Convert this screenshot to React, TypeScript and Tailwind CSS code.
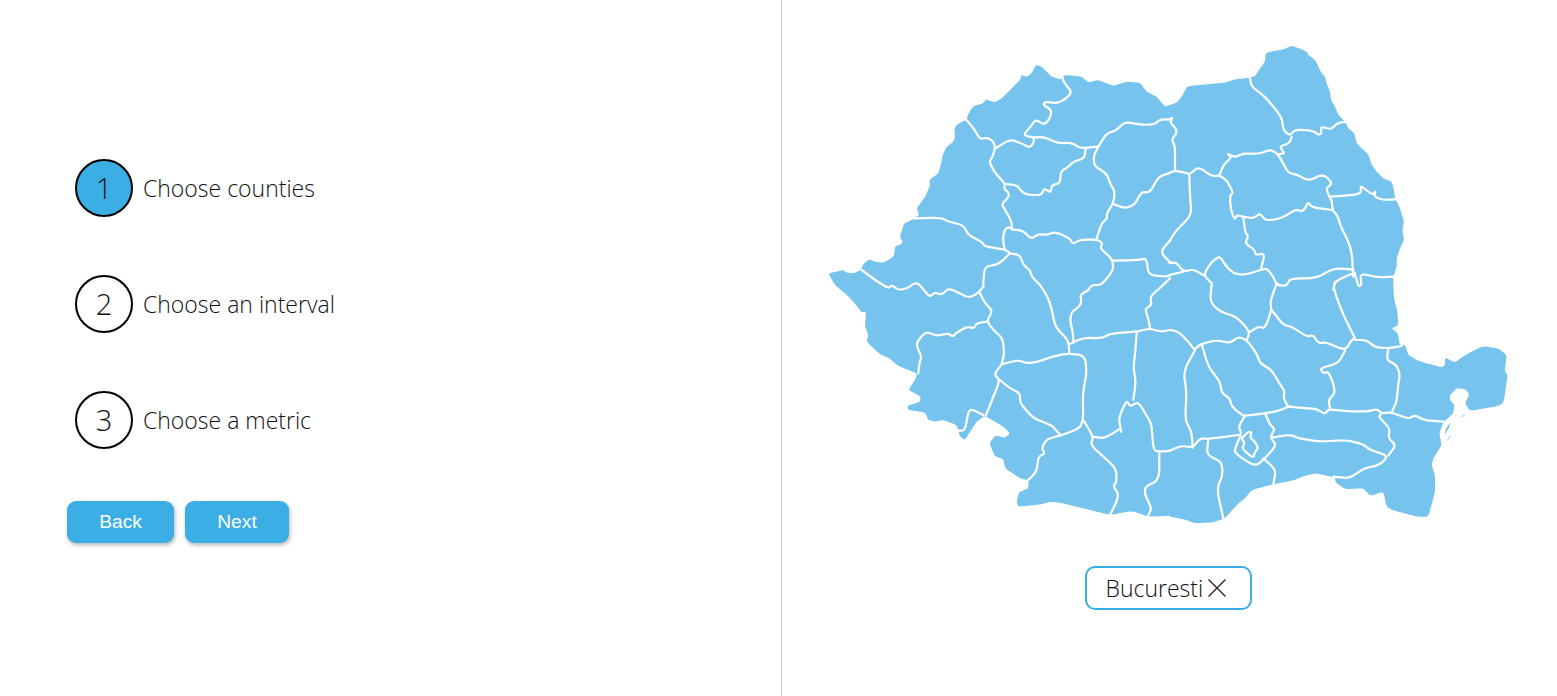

import React from "react";

type Pt = [number, number];
const parse = (ox: number, oy: number, s: string): Pt[] =>
  s.trim().split(/\s+/).map((p) => {
    const [x, y] = p.split(",").map(Number);
    return [ox + x / 3, oy + y / 3] as Pt;
  });

const f = (n: number) => n.toFixed(1);

const rounded = (pts: Pt[], t: number, closed: boolean) => {
  const n = pts.length;
  const at = (i: number) => pts[(i + n) % n];
  let d = "";
  const first = closed ? 0 : 1;
  const last = closed ? n : n - 1;
  if (!closed) d = `M${f(pts[0][0])} ${f(pts[0][1])}`;
  for (let i = first; i < last; i++) {
    const p = at(i);
    const a = at(i - 1);
    const b = at(i + 1);
    const sx = p[0] + (a[0] - p[0]) * t;
    const sy = p[1] + (a[1] - p[1]) * t;
    const ex = p[0] + (b[0] - p[0]) * t;
    const ey = p[1] + (b[1] - p[1]) * t;
    d += `${d ? " L" : "M"}${f(sx)} ${f(sy)} Q${f(p[0])} ${f(p[1])} ${f(ex)} ${f(ey)}`;
  }
  if (closed) d += " Z";
  else d += ` L${f(pts[n - 1][0])} ${f(pts[n - 1][1])}`;
  return d;
};

const outline =
  parse(820, 40, "25,700 70,690 80,698 100,700 122,690 130,672 148,658 165,665 190,668 205,660 222,648 225,620 245,612 248,605 240,590 252,550 280,537 297,525 290,505 310,478 318,465 330,435 328,420 355,400 362,375 368,345 380,320 400,305 405,290 403,265 415,250 440,240 443,225 460,198 490,190 497,178 525,187 545,175 570,150 600,120 605,105 620,110 635,100 648,75 665,80 680,95 695,110 722,118 732,105 785,110 805,127 835,120 880,138 920,125 960,128 980,155 1010,170 1035,200")
    .concat(parse(1170, 40, "0,195 20,188 35,170 50,142 60,138 165,128 195,118 240,113 255,108 268,88 285,65 287,38 345,27 365,17 395,28 410,35 418,48 430,55 440,68 452,95 465,110 470,130 480,155 483,180 495,200 505,225 525,245 535,265 553,280 560,310 575,325 595,342 605,375 620,395 640,415 665,425 672,450 675,475 690,505 702,545 697,570 702,600 690,625 680,655 680,680 670,710"))
    .concat(parse(1170, 285, "670,0 672,40 682,80 685,120 665,130 683,145 690,180 705,180 715,210 740,225 770,235 815,247 825,240 825,218 855,232 890,207 940,183 985,190 1010,210 1005,260 1013,270 1000,360 900,378 885,355 898,328 885,312 860,310 840,330 840,345 853,360 850,385 820,412 808,445 815,480 790,520 785,540 795,570 795,620 775,695 740,695 665,675 650,665 640,620 600,632 580,610 525,612 497,592 495,578 440,565 405,572 375,585 300,600 245,615 225,640 200,660 165,700 130,712 75,715 50,705 0,695"))
    .concat(parse(820, 285, "1050,692 985,695 935,678 870,690 780,668 730,655 695,650 655,660 595,665 590,650 597,622 625,610 625,585 605,582 555,550 550,522 525,515 508,475 525,452 555,458 570,445 550,425 495,392 470,410 435,465 420,455 410,420 370,405 345,410 325,405 315,382 265,375 262,362 300,350 302,335 265,315 285,285 292,265 235,243 208,220 180,208 140,170 145,150 135,125 138,80 125,82 100,50 75,25 45,0"));

const z3 = [
  "440,240 455,258 470,280 480,297 505,293 520,305 526,320 518,350 508,365 520,390 535,410 555,430 552,447 567,458 565,473 545,492 555,510 567,530 575,548 575,565",
  "727,108 730,125 755,155 745,170 715,190 675,185 670,195 695,210 690,235 672,255 648,238 630,262 610,285 640,293 670,290 715,310 755,308 780,325 835,320",
  "527,325 570,298 605,310 628,323 642,308 640,293",
  "797,325 793,355 760,365 745,380 722,395 720,430 695,435 692,458 672,445 665,465 625,465 605,455 590,435 555,432",
  "835,320 860,280 888,272 915,245 965,255 1005,253 1020,238 1052,238",
  "835,320 820,350 825,380 860,400 870,430 885,455 880,490 860,520 862,535 845,550 830,595",
  "880,492 915,505 943,495 965,455 990,458 1015,410 1052,398",
  "575,565 560,562 550,580 550,610 555,630",
  "575,568 610,572 633,597 655,582 680,585 705,575 750,595 757,612 780,600 830,598 848,610 840,625 870,650 878,665 880,690 845,735 815,735 805,750",
  "878,662 955,660 980,655 985,705 1040,710 1052,705",
  "1052,600 1020,635 1052,670",
  "280,535 365,533 385,545 430,555 445,585 485,605 495,620 555,628 570,640",
  "125,690 165,720 205,745 215,735 235,750 262,745 285,728 300,735 315,755 330,770 345,757 365,765 385,745 420,760 445,773 470,763 490,740",
  "570,640 545,665 525,675 495,680 490,720 490,740",
  "570,640 600,645 610,675 630,690 635,710 660,735",
];
const z4 = [
  "0,238 8,232 0,248 18,265 20,280 5,298 15,320 15,345 15,392",
  "240,115 245,140 285,170 335,230 340,270 360,287 375,268 430,272 445,285 455,280 452,260 485,268 500,250 527,245",
  "365,290 358,310 328,320 345,340 325,343",
  "-2,398 15,392 45,398 60,403 85,380 125,408 148,407",
  "148,407 160,375 185,352 170,340 195,352 220,340 270,342 300,328 325,343 355,400 380,403 415,423 460,402 488,430 467,445 483,480",
  "483,470 550,465 575,458 570,435 607,465 617,452 612,470 640,480 675,478",
  "485,480 487,510 505,530 510,555 545,625 550,710",
  "148,407 170,420 190,460 180,465 182,510 195,540 200,525 220,530 250,535 270,520 285,540 310,540 345,530 375,508 400,515 415,485 425,502 487,510",
  "220,530 225,575 235,590 225,610 255,630 255,645 285,640 272,690",
  "272,690 222,705 190,700 165,675 150,648 125,665 100,705 125,730",
  "272,690 290,685 310,710 320,735 350,738 360,715 440,715 490,685 545,688",
  "545,688 555,700 565,740 575,735 570,700 620,712 670,710",
  "555,700 535,705 495,725 490,750",
  "58,403 60,470 65,525 20,570 0,600",
  "-2,668 20,668 40,695 70,688 100,705",
  "-2,705 40,695",
];
const z5 = [
  "660,0 680,30 695,70 705,125 745,165 748,205",
  "748,178 790,158 845,160 875,145 950,140 990,130 1020,140 1052,135",
  "805,15 780,30 785,48 778,65 755,80 750,105 760,150 760,172",
  "1050,-20 1030,0 990,35 995,60 975,72 985,100 990,130",
  "480,25 495,55 518,78 500,108 520,135 548,160 553,205 545,238",
  "500,110 470,115 462,130 440,125 410,143 398,155 385,145 350,153 320,140 300,158 288,180 305,215 298,235 295,265",
  "545,238 595,225 620,235 655,230 695,215 745,205 795,212 800,265 788,325 790,400 780,430 720,452 680,462 665,490 675,505 655,515 650,560 625,585",
  "545,238 522,268 540,285 520,335 497,392",
  "540,285 570,310 600,325 600,355 640,400 680,415 700,425 722,452",
  "410,437 435,437 445,380 455,372 490,390",
  "790,405 820,455 812,480 850,515 888,550 890,590 880,605 895,625 890,650 870,690",
  "820,455 850,460 880,445 900,430 905,445 895,400 920,345 930,365 955,350 985,400 995,420 1000,495 1020,500 1052,497",
  "950,142 945,210 940,250 948,290 940,345",
  "1018,500 1018,585 975,605 975,630 995,670 985,690",
];
const z6 = [
  "125,-5 120,50 150,80 200,95 240,140 230,165",
  "240,140 265,125 285,130 305,75 300,50 320,-5",
  "305,75 340,120 365,125 410,155 430,150 445,175 470,172 525,197 545,165 555,160",
  "555,160 520,90 490,10 495,-10",
  "555,165 590,165 615,187 655,190 695,183",
  "655,190 650,225 680,240 690,270 685,295 680,350 665,382",
  "525,197 505,235 450,250 460,265 475,260 490,295 495,325 475,345 480,370",
  "0,135 25,140 60,175 72,195 90,178 140,165 180,175 205,155 230,165 260,205 270,235 305,255 325,290 345,320 340,340 355,365",
  "355,365 410,370 440,372 465,388 475,372 520,378 590,380 620,372 635,385 665,382 715,402 735,390 760,405 820,410",
  "355,365 325,378 285,385 225,392",
  "285,385 300,420 315,432 300,458 320,480 285,520 255,545 195,505 195,490 215,445 205,425 225,392",
  "305,458 350,450 370,452 385,460 450,470 530,465 580,478 600,495 655,512 630,540 580,550 540,580 490,575",
  "635,385 625,395 660,430 655,460 678,480 655,512",
  "280,520 318,555 310,597",
  "95,178 115,245 150,290 155,325 180,340 185,365 220,392",
  "75,195 40,260 50,320 45,405 65,440 68,488",
  "-2,497 35,482 68,488 90,460 115,462 205,450",
  "115,462 110,510 155,530 158,572 140,610 160,700",
  "215,460 235,440 245,442 240,458 255,470 265,490 255,500 250,520 215,490 225,475 215,460",
];

const borders = [
  ...z3.map((s) => parse(820, 40, s)),
  ...z4.map((s) => parse(1170, 40, s)),
  ...z5.map((s) => parse(820, 285, s)),
  ...z6.map((s) => parse(1170, 285, s)),
];

const slivers = [
  "868,398 888,386 880,394",
  "828,430 842,412 836,430 824,450",
  "835,458 845,447 830,472",
].map((s) => parse(1170, 285, s));

function RomaniaMap() {
  return (
    <svg viewBox="820 40 700 490" width="700" height="490" className="block shrink-0">
      <path d={rounded(outline, 0.2, true)} fill="#76C4EE" />
      {slivers.map((p, i) => (
        <polygon key={i} points={p.map((q) => q.join(",")).join(" ")} fill="#76C4EE" />
      ))}
      {borders.map((p, i) => (
        <path
          key={i}
          d={rounded(p, 0.4, false)}
          fill="none"
          stroke="#fff"
          strokeWidth="2.2"
          strokeLinecap="round"
          strokeLinejoin="round"
        />
      ))}
    </svg>
  );
}

function Step({ n, label, active }: { n: number; label: string; active?: boolean }) {
  return (
    <div className="flex items-center gap-[10px]">
      <div
        className={
          active
            ? "flex h-[58px] w-[58px] items-center justify-center rounded-full border-2 border-black bg-[#3BAEE6] text-[29px] font-light text-[#111]"
            : "flex h-[58px] w-[58px] items-center justify-center rounded-full border-2 border-black bg-white text-[29px] font-light text-[#111]"
        }
      >
        {n}
      </div>
      <span className="text-[23px] font-light text-[#111]">{label}</span>
    </div>
  );
}

export default function App() {
  return (
    <div className="flex h-[696px] w-[1557px] overflow-hidden bg-white font-['Open_Sans',sans-serif]">
      <div className="h-full w-[782px] shrink-0 border-r border-[#cccccc] pl-[67px] pt-[159px]">
        <div className="ml-[8px] flex flex-col gap-[58px]">
          <Step n={1} label="Choose counties" active />
          <Step n={2} label="Choose an interval" />
          <Step n={3} label="Choose a metric" />
        </div>
        <div className="mt-[52px] flex gap-[11px] font-['Liberation_Sans',sans-serif]">
          <button className="h-[42px] w-[107px] rounded-[9px] bg-[#3BAEE6] text-[19.2px] text-white shadow-[1px_2px_4px_rgba(0,0,0,0.3)]">
            Back
          </button>
          <button className="h-[42px] w-[104px] rounded-[9px] bg-[#3BAEE6] text-[19.2px] text-white shadow-[1px_2px_4px_rgba(0,0,0,0.3)]">
            Next
          </button>
        </div>
      </div>
      <div className="flex h-full flex-1 flex-col items-center pt-[40px]">
        <RomaniaMap />
        <div className="mr-[3px] mt-[36px] flex h-[44px] w-[167px] items-center gap-[4px] rounded-[10px] border-2 border-[#3BAEE6] pl-[19px] text-[23px] font-light text-[#111]">
          <span>Bucuresti</span>
          <svg viewBox="0 0 20 20" width="20" height="20" stroke="#222" strokeWidth="1.3" fill="none">
            <path d="M1.5 1.5 L18.5 18.5 M18.5 1.5 L1.5 18.5" />
          </svg>
        </div>
      </div>
    </div>
  );
}
